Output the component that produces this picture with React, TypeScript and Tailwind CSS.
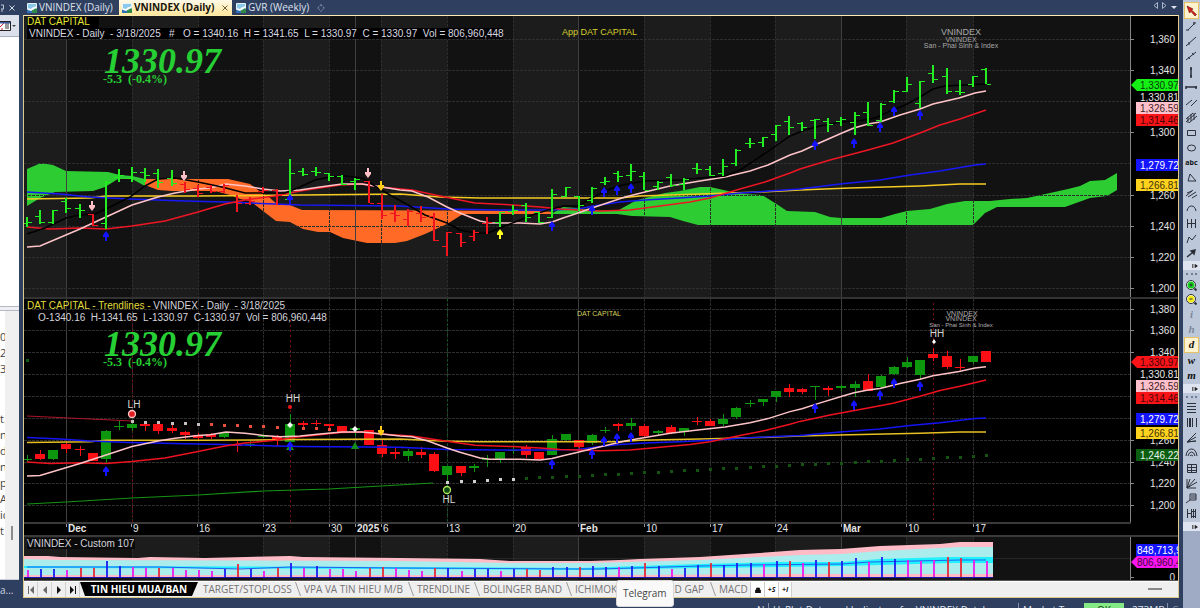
import React from "react";

type Pt = [number, number];

const x0 = 27;
const step = 13.137;
const bx = (i: number) => Math.round(x0 + i * step);
const toLower = (y: number) => 352 + (y - 70) * 0.701;

/* high, low, open, close as screen rows of the upper pane */
const bars: [number, number, number, number][] = [
  [217, 227, 223, 222], [210, 224, 216, 222], [210, 224, 222, 210], [198, 213, 201, 208], [204, 218, 208, 210],
  [214, 226, 214, 225], [181, 229, 223, 182], [169, 182, 177, 175], [167, 182, 178, 172], [168, 182, 172, 175],
  [169, 188, 173, 182], [170, 186, 178, 183], [182, 193, 184, 189], [185, 197, 188, 193], [185, 193, 187, 191],
  [184, 193, 191, 185], [195, 212, 202, 203], [197, 205, 203, 201], [187, 193, 191, 190], [189, 205, 190, 195],
  [159, 200, 199, 173], [168, 176, 171, 174], [167, 176, 171, 172], [173, 181, 173, 176], [175, 185, 176, 184],
  [178, 190, 181, 179], [181, 203, 181, 203], [194, 219, 203, 215], [205, 222, 213, 215], [209, 226, 219, 211],
  [206, 222, 213, 217], [213, 241, 216, 240], [232, 256, 246, 232], [233, 247, 233, 242], [230, 241, 236, 232],
  [217, 234, 223, 222], [212, 227, 222, 212], [205, 215, 211, 210], [203, 222, 205, 217], [212, 223, 212, 222],
  [189, 218, 217, 194], [187, 197, 196, 187], [196, 211, 196, 205], [187, 203, 200, 188], [177, 185, 182, 181],
  [171, 182, 173, 176], [164, 181, 175, 171], [172, 190, 176, 190], [181, 190, 186, 182], [174, 187, 177, 185],
  [178, 190, 184, 179], [163, 174, 168, 169], [166, 176, 169, 175], [159, 176, 173, 166], [149, 166, 163, 150],
  [138, 148, 143, 143], [137, 147, 142, 137], [125, 141, 134, 125], [116, 135, 121, 127], [122, 131, 123, 127],
  [119, 139, 120, 119], [118, 132, 121, 124], [117, 126, 121, 119], [112, 135, 122, 115], [102, 126, 112, 125],
  [103, 122, 120, 104], [90, 103, 101, 91], [77, 92, 91, 84], [81, 108, 103, 81], [65, 83, 73, 79],
  [68, 94, 76, 91], [80, 95, 91, 92], [76, 87, 84, 76], [68, 84, 69, 84],
];
const isDown = (i: number) => i === 5 || (i >= 12 && i <= 19) || (i >= 26 && i <= 35);

const pink: Pt[] = [[27, 247], [40, 246], [80, 229], [106, 217], [132, 205], [158, 197], [175, 193], [198, 189], [210, 188], [226, 184], [245, 186], [263, 189], [280, 191], [300, 190], [320, 187], [342, 184], [362, 184], [382, 187], [400, 190], [412, 191], [428, 197], [447, 207], [460, 213], [480, 221], [490, 223], [520, 223], [540, 224], [552, 222], [563, 218], [578, 213], [592, 208], [610, 202], [625, 197], [645, 192], [670, 186], [700, 181], [725, 177], [750, 171], [768, 165], [790, 155], [802, 151], [817, 144], [842, 133], [854, 128], [868, 124], [880, 122], [900, 115], [920, 109], [933, 104], [959, 98], [975, 93], [986, 91]];
const red: Pt[] = [[27, 227], [50, 229], [80, 228], [106, 229], [132, 226], [165, 221], [198, 212], [225, 204], [245, 200], [275, 196], [300, 191], [320, 188], [340, 185], [362, 184], [380, 187], [412, 190], [440, 196], [475, 203], [513, 205], [540, 207], [560, 209], [578, 210], [600, 211], [630, 210], [660, 206], [690, 202], [710, 198], [740, 189], [765, 182], [790, 173], [800, 169], [830, 160], [868, 150], [893, 143], [920, 133], [940, 125], [960, 119], [986, 110]];
const blue: Pt[] = [[27, 192], [60, 194], [90, 197], [130, 199], [185, 201], [225, 202], [250, 203], [275, 204], [300, 205], [400, 206], [447, 209], [500, 210], [550, 210], [578, 209], [600, 205], [620, 202], [645, 200], [680, 198], [710, 196], [740, 193], [770, 191], [800, 189], [840, 184], [880, 180], [910, 175], [940, 171], [975, 165], [986, 164]];
const yellow: Pt[] = [[27, 199], [90, 198], [106, 196], [200, 196], [300, 195], [400, 194], [440, 197], [480, 198], [560, 198], [620, 198], [640, 196], [700, 194], [760, 192], [800, 190], [850, 188], [920, 186], [960, 184], [986, 184]];
const black: Pt[] = [[27, 234], [45, 228], [66, 218], [80, 215], [95, 214], [110, 207], [130, 197], [145, 186], [158, 179], [175, 178], [198, 182], [222, 187], [245, 193], [285, 193], [300, 187], [315, 180], [330, 177], [345, 176], [362, 178], [378, 188], [390, 195], [408, 205], [425, 215], [447, 223], [460, 230], [475, 233], [488, 233], [500, 228], [520, 220], [535, 214], [548, 210], [563, 206], [578, 206], [590, 199], [605, 191], [622, 185], [645, 181], [680, 180], [700, 178], [725, 176], [740, 170], [755, 160], [770, 150], [780, 143], [790, 136], [805, 130], [820, 126], [841, 122], [858, 121], [875, 118], [893, 110], [905, 105], [920, 97], [933, 89], [945, 86], [986, 84]];

const pts = (line: Pt[], lower = false) => line.map(([x, y]) => `${x},${lower ? toLower(y).toFixed(1) : y}`).join(" ");

const weeks = [132, 198, 263, 329, 381, 447, 513, 644, 710, 775, 906, 973];
const months = [66, 355, 578, 841];
const lightBands: Pt[] = [[24, 66], [132, 198], [263, 329], [381, 447], [513, 578], [644, 710], [775, 841], [906, 973]];

function Bands({ top, height }: { top: number; height: number }) {
  return (
    <g>
      <rect x="24" y={top} width="1107" height={height} fill="#121212" />
      {lightBands.map(([a, b]) => (
        <rect key={a} x={a} y={top} width={b - a} height={height} fill="#1c1c1c" />
      ))}
    </g>
  );
}

function Verticals({ top, bottom }: { top: number; bottom: number }) {
  return (
    <g shapeRendering="crispEdges">
      {weeks.map((x) => (
        <line key={x} x1={x + 0.5} x2={x + 0.5} y1={top} y2={bottom} stroke="#2c2c2c" strokeDasharray="3 1" />
      ))}
      {months.map((x) => (
        <line key={x} x1={x + 0.5} x2={x + 0.5} y1={top} y2={bottom} stroke="#404040" />
      ))}
    </g>
  );
}

function Horizontals({ rows }: { rows: number[] }) {
  return (
    <g shapeRendering="crispEdges">
      {rows.map((y) => (
        <g key={y}>
          <line x1="24" x2="1130" y1={y + 0.5} y2={y + 0.5} stroke="#2e2e2e" strokeDasharray="3 1" />
          <line x1="1131" x2="1134" y1={y + 0.5} y2={y + 0.5} stroke="#8a8a8a" />
        </g>
      ))}
    </g>
  );
}

const arrowPath = "M0 0 L3 4 V6 H1 V10 H-1 V6 H-3 V4 Z";
function Up({ x, y, fill = "#1414ff" }: { x: number; y: number; fill?: string }) {
  return <path d={arrowPath} transform={`translate(${x} ${y})`} fill={fill} />;
}
function Down({ x, y, fill }: { x: number; y: number; fill: string }) {
  return <path d={arrowPath} transform={`translate(${x} ${y}) rotate(180)`} fill={fill} />;
}

function Tag({ y, fill, text, color, pointer = false }: { y: number; fill: string; text: string; color: string; pointer?: boolean }) {
  return (
    <g>
      {pointer ? (
        <path d={`M1131 ${y} L1137 ${y - 6} H1178 V${y + 6} H1137 Z`} fill={fill} />
      ) : (
        <rect x="1136" y={y - 6} width="42" height="12" fill={fill} />
      )}
      <text x={text.length > 8 ? 1137 : 1140} y={y + 4} fill={color} fontSize="10">{text}</text>
    </g>
  );
}

function PriceAxis({ top, height, labels }: { top: number; height: number; labels: [number, string][] }) {
  return (
    <g>
      <rect x="1131" y={top} width="47" height={height} fill="#000" />
      <rect x="1130" y={top} width="1" height={height} fill="#858585" />
      {labels.map(([y, t]) => (
        <g key={t}>
          <rect x="1131" y={y} width="3" height="1" fill="#8a8a8a" />
          <text x="1175" y={y + 4} fill="#e4e4e4" fontSize="10" textAnchor="end">{t}</text>
        </g>
      ))}
    </g>
  );
}

function LastPrice({ top }: { top: number }) {
  return (
    <g fill="#26cf33" fontFamily="Liberation Serif, serif" fontWeight="700">
      <text x="104" y={top + 24} fontSize="36" fontStyle="italic">1330.97</text>
      <text x="103" y={top + 34} fontSize="12" className="whitespace-pre">{"-5.3  (-0.4%)"}</text>
    </g>
  );
}

const paneClass = "block h-auto w-full font-['Liberation_Sans',sans-serif]";

function UpperPane() {
  const upArrows: Pt[] = [[106, 231], [290, 194], [552, 221], [592, 205], [604, 187], [617, 185], [631, 183], [815, 140], [854, 138], [880, 122], [894, 106], [920, 110]];
  return (
    <svg viewBox="24 16 1154 283" className={paneClass} role="img" aria-label="VNINDEX daily price bars">
      <Bands top={16} height={283} />
      <g fill="#2ecc33">
        <path d="M27 169 L41 163 L53 165 L66 171 L108 172 L120 175 L132 176 L145 179 V186 L132 179 L118 179 L105 187 L93 191 L55 192 L40 198 L27 206 Z" />
        <path d="M553 213 L563 207 L575 208 L590 210 L617 211 L635 201 L645 198 L665 193 L680 191 L700 187 L710 187 L728 191 L745 194 L762 195 L775 203 L787 211 L815 212 L830 217 L841 218 L881 218 L895 214 L907 211 L930 209 L947 204 L965 201 L990 201 L1010 199 L1027 198 L1050 193 L1068 189 L1080 186 L1090 181 L1105 180 L1117 173 V190 L1107 196 L1090 198 L1065 207 L997 207 L985 213 L973 225 L698 225 L683 221 L670 217 L632 216 L617 214 L553 214 Z" />
      </g>
      <path d="M145 179 L228 179 L250 184 L262 193 L270 198 L278 205 L290 205 L302 210 L540 211 L553 212 V214 L463 214 L455 219 L447 224 L425 234 L407 241 L395 243 L367 243 L343 238 L330 232 L318 232 L303 229 L290 222 L276 221 L263 211 L250 201 L240 199 L230 195 L215 191 L172 191 L158 190 L145 185 Z" fill="#ff6a26" />
      <Verticals top={16} bottom={297} />
      <Horizontals rows={[39, 70, 101, 132, 163, 195, 226, 257, 288]} />
      <g fill="none" strokeWidth="1.5">
        <polyline points={pts(yellow)} stroke="#f5cb22" />
        <polyline points={pts(blue)} stroke="#1818f5" />
        <polyline points={pts(red)} stroke="#ee1624" />
        <polyline points={pts(pink)} stroke="#ffc4c8" />
        <polyline points={pts(black)} stroke="#000" />
      </g>
      <g shapeRendering="crispEdges">
        {bars.map(([h, l, o, c], i) => (
          <g key={i} fill={isDown(i) ? "#f2151f" : "#22ee22"}>
            <rect x={bx(i) - 1} y={h} width="2" height={l - h} />
            <rect x={bx(i) - 5} y={o} width="4" height="1" />
            <rect x={bx(i) + 1} y={c} width="4" height="1" />
          </g>
        ))}
      </g>
      {upArrows.map(([x, y]) => <Up key={x} x={x} y={y} />)}
      <Up x={500} y={229} fill="#ffff22" />
      <Down x={92} y={211} fill="#ffc0c8" />
      <Down x={184} y={181} fill="#ffc0c8" />
      <Down x={368} y={178} fill="#ffc0c8" />
      <Down x={381} y={191} fill="#ffcc18" />
      <rect x="27" y="17" width="72" height="11" fill="#000" />
      <rect x="27" y="28" width="476" height="11" fill="#000" />
      <text x="27" y="25" fontSize="10" fill="#e6e632">DAT CAPITAL</text>
      <text x="29" y="37" fontSize="10" fill="#d8d8e0" className="whitespace-pre">
        {"VNINDEX - Daily  - 3/18/2025   #   O = 1340.16  H = 1341.65  L = 1330.97  C = 1330.97  Vol = 806,960,448"}
      </text>
      <text x="562" y="35" fontSize="9" fill="#d6cf2e">App DAT CAPITAL</text>
      <g fill="#a8a8a8" textAnchor="middle">
        <text x="961" y="35" fontSize="9">VNINDEX</text>
        <text x="961" y="42" fontSize="7">VNINDEX</text>
        <text x="961" y="48" fontSize="7">San - Phai Sinh &amp; Index</text>
      </g>
      <LastPrice top={49} />
      <rect x="24" y="297" width="1154" height="2" fill="#333" />
      <PriceAxis top={16} height={281} labels={[[39, "1,360"], [70, "1,340"], [132, "1,300"], [195, "1,260"], [226, "1,240"], [257, "1,220"], [288, "1,200"]]} />
      <Tag y={85} fill="#14f014" text="1,330.97" color="#083808" pointer />
      <Tag y={97} fill="#000" text="1,330.81" color="#e8e8e8" />
      <Tag y={108} fill="#ffc0cb" text="1,326.59" color="#3a2024" />
      <Tag y={120} fill="#fa1418" text="1,314.46" color="#480408" />
      <Tag y={165} fill="#1414ff" text="1,279.72" color="#fff" />
      <Tag y={185} fill="#ffd21e" text="1,266.81" color="#3c3008" />
    </svg>
  );
}

function LowerPane() {
  const upArrows: Pt[] = [[106, 466], [290, 441], [552, 459], [592, 449], [604, 436], [617, 433], [631, 432], [815, 403], [854, 400], [880, 390], [894, 378], [920, 381]];
  const dates: [number, string, boolean][] = [[68, "Dec", true], [133, "9", false], [199, "16", false], [265, "23", false], [331, "30", false], [357, "2025", true], [383, "6", false], [449, "13", false], [515, "20", false], [580, "Feb", true], [646, "10", false], [712, "17", false], [777, "24", false], [843, "Mar", true], [908, "10", false], [975, "17", false]];
  const resist = [8, 9, 10, 11, 12, 13, 14, 15, 16, 17, 18, 19, 21, 22, 23];
  return (
    <svg viewBox="24 299 1154 238" className={paneClass} role="img" aria-label="VNINDEX daily candles with trendlines">
      <rect x="24" y="299" width="1154" height="238" fill="#000" />
      <Verticals top={299} bottom={522} />
      <Horizontals rows={[309, 330, 352, 374, 396, 418, 440, 462, 483, 505]} />
      <g strokeDasharray="2 3" shapeRendering="crispEdges">
        <path d="M132.500 320 V522 M290.500 320 V522 M933.500 303 V522" stroke="#7a0e14" />
        <path d="M447.500 299 V522" stroke="#0d5a22" />
      </g>
      <polyline points="27,416 132,421" stroke="#b01428" fill="none" />
      <polyline points="27,504 66,502 132,498 198,495 263,491 329,489 433,483" stroke="#149414" fill="none" strokeWidth="1.2" />
      <g shapeRendering="crispEdges">
        {bars.map(([h, l, o, c], i) => {
          const yo = Math.round(toLower(o));
          const yc = Math.round(toLower(c));
          return (
            <g key={i} fill={c <= o ? "#0c970f" : "#fa0f14"}>
              <rect x={bx(i)} y={Math.round(toLower(h))} width="1" height={Math.round((l - h) * 0.701)} />
              <rect x={bx(i) - 5} y={Math.min(yo, yc)} width="10" height={Math.max(1, Math.abs(yo - yc))} />
            </g>
          );
        })}
      </g>
      <g fill="none" strokeWidth="1.5">
        <polyline points={pts(yellow, true)} stroke="#e6c022" />
        <polyline points={pts(blue, true)} stroke="#1414f5" />
        <polyline points={pts(red, true)} stroke="#ee1220" />
        <polyline points={pts(pink, true)} stroke="#ffc4c8" />
      </g>
      <g shapeRendering="crispEdges">
        {resist.map((i) => (
          <rect key={i} x={bx(i) - 1} y={Math.round(420 + (i - 8) * 0.53)} width="3" height="3" fill={i < 14 ? "#c8c0c0" : "#e8503c"} />
        ))}
        {Array.from({ length: 42 }, (_, k) => k + 32).map((i) => (
          <rect key={i} x={bx(i) - 1} y={Math.round(481 - (i - 32) * 0.65)} width="3" height="3" fill={i < 38 ? "#d0d0d0" : "#145214"} />
        ))}
        <rect x="26" y="359" width="3" height="3" fill="#0c5c14" />
      </g>
      <path d="M290 443 L294 450 H286 Z M355 442 L359 449 H351 Z" fill="#128c1c" />
      {upArrows.map(([x, y]) => <Up key={x} x={x} y={y} />)}
      <Down x={381} y={436} fill="#ffcc18" />
      <circle cx="132" cy="414" r="3.500" fill="#e02024" stroke="#ffc8c8" strokeWidth="1.300" />
      <circle cx="447" cy="490" r="3.500" fill="#0d4c12" stroke="#b4e860" strokeWidth="1.300" />
      <circle cx="290" cy="407" r="2" fill="#f01818" />
      <path d="M290 422 L293 425 L290 428 L287 425 Z M355 426 L358 429 L355 432 L352 429 Z M934 339 L936 342 L934 344 L932 342 Z" fill="#fff" />
      <g fontSize="10" fill="#d8d8d8" textAnchor="middle">
        <text x="134" y="408">LH</text>
        <text x="293" y="402">HH</text>
        <text x="937" y="337">HH</text>
        <text x="449" y="503">HL</text>
      </g>
      <text x="27" y="309" fontSize="10" className="whitespace-pre">
        <tspan fill="#e0dc3c">{"DAT CAPITAL - Trendlines - "}</tspan>
        <tspan fill="#d4d4dc">{"VNINDEX - Daily  - 3/18/2025"}</tspan>
      </text>
      <text x="38" y="321" fontSize="10" fill="#d4d4dc" className="whitespace-pre">
        {"O-1340.16  H-1341.65  L-1330.97  C-1330.97  Vol = 806,960,448"}
      </text>
      <text x="577" y="316" fontSize="7" fill="#d6cf5e">DAT CAPITAL</text>
      <g fill="#b0b0b0" textAnchor="middle">
        <text x="962" y="316" fontSize="7">VNINDEX</text>
        <text x="961" y="321" fontSize="7">VNINDEX</text>
        <text x="961" y="327" fontSize="6">San - Phai Sinh &amp; Index</text>
      </g>
      <LastPrice top={332} />
      <rect x="24" y="524" width="1154" height="11" fill="#000" />
      <rect x="24" y="522" width="1107" height="2" fill="#3a3a3a" />
      {dates.map(([x, t, bold]) => (
        <g key={x}>
          <rect x={x - 2} y="524" width="1" height="3" fill="#999" />
          <text x={x} y="532" fontSize="10" fill="#e6e6e6" fontWeight={bold ? 700 : 400}>{t}</text>
        </g>
      ))}
      <PriceAxis top={299} height={223} labels={[[309, "1,380"], [330, "1,360"], [352, "1,340"], [440, "1,260"], [462, "1,240"], [483, "1,220"], [505, "1,200"]]} />
      <Tag y={362} fill="#fa1418" text="1,330.97" color="#480408" pointer />
      <Tag y={374} fill="#000" text="1,330.81" color="#e8e8e8" />
      <Tag y={386} fill="#ffc0cb" text="1,326.59" color="#3a2024" />
      <Tag y={398} fill="#fa1418" text="1,314.46" color="#480408" />
      <Tag y={419} fill="#1414ff" text="1,279.72" color="#fff" />
      <Tag y={433} fill="#ffd21e" text="1,266.81" color="#3c3008" />
      <Tag y={455} fill="#0b5d10" text="1,246.22" color="#e8f4e8" />
      <rect x="24" y="535" width="1154" height="2" fill="#3a3a3a" />
    </svg>
  );
}

const volTops = [360, 358, 358, 360, 355, 353, 332, 347, 350, 353, 353, 353, 360, 360, 363, 358, 342, 358, 362, 353, 338, 355, 348, 357, 358, 362, 353, 350, 353, 360, 363, 355, 355, 362, 358, 358, 362, 358, 358, 360, 352, 352, 352, 347, 350, 352, 348, 338, 348, 357, 355, 345, 338, 345, 338, 338, 343, 333, 332, 340, 330, 335, 333, 325, 335, 322, 328, 330, 332, 330, 322, 325, 330, 333];
const volKinds = "mbbmrrbbmmrmmmmbrbmrbmbmmmrrmmmrbmbbmbrrbbrbbmbrbmbbrbbbmbrmbrbbmbbmmmrrmm";
const volColors: Record<string, string> = { m: "#f018e8", b: "#1c1cf0", r: "#e82838" };

function VolumePane() {
  return (
    <svg viewBox="24 537 1154 44" className={paneClass} role="img" aria-label="VNINDEX volume">
      <Bands top={537} height={44} />
      <rect x="24" y="558" width="1107" height="1" fill="#262626" />
      <Verticals top={537} bottom={578} />
      <path d="M24 556 L48 556 L60 557 L138 558 L150 557 L205 558 L290 556 L303 557 L400 558 L480 559 L510 561 L590 561 L620 560 L640 559 L700 557 L760 553 L800 550 L841 549 L880 546 L940 544 L960 542 L993 542 V577 H24 Z" fill="#ffbcc6" />
      <path d="M24 559 L60 560 L400 561 L510 563 L590 563 L700 560 L760 557 L800 555 L841 554 L880 551 L960 547 L993 547 V574 L800 574 L600 575 L24 575 Z" fill="#abecec" />
      <path d="M24 566 L400 567 L580 568 L700 564 L780 562 L841 562 L880 559 L950 557 L993 557 V563 L950 563 L880 565 L841 566 L780 567 L700 568 L580 570 L400 569 L24 568 Z" fill="#20f0ff" />
      <polyline points="27,567 160,567 240,569 290,567 400,568 578,569 600,569 700,566 750,565 841,564 870,562 960,560 986,560" stroke="#2060f0" fill="none" />
      <g shapeRendering="crispEdges">
        {volTops.map((v, i) => {
          const y = Math.round(450 + v / 3);
          return <rect key={i} x={bx(i)} y={y} width="2" height={577 - y} fill={volColors[volKinds[i]]} fillOpacity="0.9" />;
        })}
        <rect x="24" y="577" width="969" height="1" fill="#1818b0" />
      </g>
      <rect x="27" y="538" width="108" height="11" fill="#0a0a0a" />
      <text x="27" y="547" fontSize="10" fill="#d4d4dc">VNINDEX - Custom 107</text>
      <PriceAxis top={537} height={43} labels={[[577, "0"]]} />
      <Tag y={550} fill="#1414ff" text="848,713,984" color="#fff" />
      <Tag y={562} fill="#fa14f0" text="806,960,448" color="#3c0838" pointer />
      <rect x="24" y="580" width="1154" height="1" fill="#555" />
    </svg>
  );
}

function ChartIcon() {
  return (
    <svg viewBox="0 0 10 10" className="size-[10px] shrink-0">
      <rect width="10" height="10" rx="1" fill="#e8f4fb" />
      <path d="M1 1 H9 V5 L6 4 L4 6 L1 5 Z" fill="#8cc8ea" />
      <path d="M0 7 L3 6 L5 7 L9 5 L10 6 V10 H0 Z" fill="#2f8a4c" />
      <path d="M0 7 L3 6 L5 8 V10 H0 Z" fill="#2c6fb4" />
      <path d="M1 6 L4 6 L9 3 V5 L4 8 L1 7 Z" fill="#f6fbff" />
    </svg>
  );
}

function DocumentTabs() {
  return (
    <header className="flex h-[15px] items-stretch text-[10px] leading-[13px] text-[#dde2ec]">
      <button className="flex w-24 items-center gap-0.5 pl-1 whitespace-nowrap"><ChartIcon />VNINDEX (Daily)</button>
      <button className="flex w-[113px] items-center gap-0.5 bg-linear-to-b from-[#fff9e6] to-[#ffe79c] pl-[3px] font-bold whitespace-nowrap text-[#16140c]">
        <ChartIcon />VNINDEX (Daily)
        <svg viewBox="0 0 6 6" className="mr-1 ml-auto size-[6px]"><path d="M0.500 0.500 L5.500 5.500 M5.500 0.500 L0.500 5.500" stroke="#6c5d3c" /></svg>
      </button>
      <button className="flex items-center gap-0.5 pl-1 whitespace-nowrap"><ChartIcon />GVR (Weekly)</button>
      <button aria-label="New tab" className="pl-2">
        <svg viewBox="0 0 8 8" className="size-2"><path d="M4 0.500 L5.500 2.500 L7.500 4 L5.500 5.500 L4 7.500 L2.500 5.500 L0.500 4 L2.500 2.500 Z" fill="none" stroke="#8b97b2" strokeDasharray="2 1" /></svg>
      </button>
      <nav className="ml-auto flex items-center gap-1 pr-0.5 pb-1">
        <button aria-label="Previous tab"><svg viewBox="0 0 5 7" className="h-[7px] w-[5px]"><path d="M4.500 0.500 V6.500 L1 3.500 Z" fill="none" stroke="#aab4ca" /></svg></button>
        <button aria-label="Next tab"><svg viewBox="0 0 5 7" className="h-[7px] w-[5px]"><path d="M0.500 0.500 V6.500 L4 3.500 Z" fill="none" stroke="#aab4ca" /></svg></button>
        <button aria-label="Tab list" className="pt-1"><svg viewBox="0 0 6 3" className="h-[3px] w-[6px]"><path d="M0 0 H6 L3 3 Z" fill="#dde2ec" /></svg></button>
      </nav>
    </header>
  );
}

function NavButton({ label, d, dark = false }: { label: string; d: string; dark?: boolean }) {
  return (
    <button aria-label={label} className="flex w-[14px] shrink-0 items-center justify-center border-r border-[#d0d0d0]">
      <svg viewBox="0 0 8 8" className="size-2"><path d={d} fill={dark ? "#111" : "#6a6a6a"} /></svg>
    </button>
  );
}

function SheetTab({ label, width }: { label: string; width: string }) {
  return (
    <button className={`relative shrink-0 text-left whitespace-nowrap ${width}`}>
      {label}
      <svg viewBox="0 0 6 14" className="absolute top-0 right-[3px] h-[14px] w-[6px]"><path d="M0.500 0 L5.500 14" stroke="#9a9a9a" fill="none" /></svg>
    </button>
  );
}

function SheetTabs() {
  return (
    <footer className="flex h-4 items-stretch border-t border-white bg-[#efefef] text-[10px] leading-[13px] text-[#747474]">
      <NavButton label="First sheet" d="M1 0 H2 V8 H1 Z M7 0 V8 L3 4 Z" />
      <NavButton label="Previous sheet" d="M6 0 V8 L2 4 Z" />
      <NavButton label="Next sheet" d="M2 0 V8 L6 4 Z" dark />
      <NavButton label="Last sheet" d="M1 0 V8 L5 4 Z M6 0 H7 V8 H6 Z" dark />
      <button className="relative w-[118px] shrink-0 text-center font-bold whitespace-nowrap text-white">
        <svg viewBox="0 0 118 15" preserveAspectRatio="none" className="absolute inset-0 h-full w-full"><path d="M0 0 H118 L112 14 H5 Z" fill="#000" /></svg>
        <span className="relative">TIN HIEU MUA/BAN</span>
      </button>
      <div className="w-[5px] shrink-0" />
      <SheetTab label="TARGET/STOPLOSS" width="w-[101px]" />
      <SheetTab label="VPA VA TIN HIEU M/B" width="w-[113px]" />
      <SheetTab label="TRENDLINE" width="w-[66px]" />
      <SheetTab label="BOLINGER BAND" width="w-[92px]" />
      <SheetTab label="ICHIMOKU" width="w-[78px]" />
      <SheetTab label="MACD GAP" width="w-[66px]" />
      <button className="w-[31px] shrink-0 text-left">MACD</button>
      <button aria-label="Lock" className="flex w-[14px] items-center justify-center border-l border-[#cfcfcf] bg-white">
        <svg viewBox="0 0 6 6" className="size-[6px]"><path d="M0.500 3 H5.500 V6 H0.500 Z M1.500 3 V1 H4.500 V3" fill="#111" stroke="#111" strokeWidth="0.700" /></svg>
      </button>
      <button className="w-[14px] border-l border-[#cfcfcf] bg-white text-[7px] font-bold text-[#222] italic">+S</button>
      <button className="w-[14px] border-x border-[#cfcfcf] bg-white text-[7px] font-bold text-[#222] italic">+I</button>
      <span className="mt-[6px] mr-4 ml-auto h-0.5 w-3.5 bg-[#888]" />
    </footer>
  );
}

const drawTools: [string, React.ReactNode][] = [
  ["Trend line", <path d="M4 11 L10 5 M2 11 H5 M10 3 V6 M9 4 H12" />],
  ["Ray", <path d="M2 12 L12 3 M5 8 V11" />],
  ["Extended line", <path d="M2 11 L12 3 M4 8 L6 10 M8 4 L10 6" />],
  ["Vertical line", <path d="M7 2 V13 M6 4 H8 M6 11 H8" strokeWidth="1.500" />],
  ["Horizontal line", <path d="M2 7 H13 M2 6 V9 M12 6 V9" strokeWidth="1.500" />],
  ["Parallel lines", <path d="M2 10 L8 5 M7 11 L13 5" />],
  ["Regression channel", <path d="M2 12 L12 3 M2 9 L9 3 M5 13 L13 6 M4 7 V13 M7 4 V11 M10 3 V10" />],
  ["Rectangle", <path d="M3.500 5.500 H11.500 V10.500 H3.500 Z" />],
  ["Ellipse", <ellipse cx="7.500" cy="8" rx="4" ry="3" />],
  ["Text", <text x="7.500" y="10" textAnchor="middle" fontSize="7" fontWeight="700" fill="#111" stroke="none">abc</text>],
  ["Triangle", <path d="M4 11 L6 4 L12 11 Z" />],
  ["Pitchfork", <path d="M2 10 L9 4 M4 11 L12 6 M3 7 L8 5 M8 12 L13 9" />],
  ["Arc", <path d="M3 10 Q4 5 7.500 5 Q11 5 12 10" />],
  ["Time zones", <path d="M3.500 3 V12 M7.500 3 V12 M11.500 3 V12 M3 7.500 H12" />],
  ["Zigzag", <path d="M3 12 L5 6 L8 9 L12 4" />],
  ["Arrow", <path d="M3 11 L8 7 M7 5 L11 4 L10 8 Z" fill="#111" strokeWidth="1.500" />],
];

const moreTools: [string, React.ReactNode][] = [
  ["Retracement", <path d="M3 3.500 H12 M3 6.500 H12 M3 9.500 H12 M3 12.500 H12" />],
  ["Cycles", <path d="M3.500 3 V12 M5.500 3 V12 M6.500 3 V12 M8.500 3 V12 M12.500 3 V12" />],
  ["Fan", <path d="M3 12 L12 3 M3 12 L12 7 M3 12 L12 11 Z" />],
  ["Arcs", <path d="M2 11 Q3 4 7.500 4 Q12 4 13 11 M4 11 Q5 7 7.500 7 Q10 7 11 11 M6 11 Q7 9 9 11" />],
  ["Grid", <path d="M3.500 3.500 H12.500 V11.500 H3.500 Z M3 6.500 H12 M3 9.500 H12 M7.500 3 V12" />],
  ["Gann fan", <path d="M3 3 V12 H12 M3 12 L6 3 M3 12 L11 3 M3 12 L13 6" />],
  ["Note", <path d="M6 3 H12 V9 H6 Z M7 5 H12 M7 7 H12 M6 9 L2 12" />],
  ["Extension", <path d="M3.500 3 V12 M3 7.500 H7 M7.500 3 V12 M9.500 3 V12 M11.500 3 V12 M7 5.500 H12 M7 10.500 H12" />],
];

function ToolButton({ label, children }: { label: string; children: React.ReactNode }) {
  return (
    <button aria-label={label} className="flex min-h-0 flex-1 items-center justify-center">
      <svg viewBox="0 0 15 15" className="size-[15px]" fill="none" stroke="#2c313c">{children}</svg>
    </button>
  );
}

function Overflow() {
  return (
    <div className="flex h-[9px] items-center justify-end bg-[#dfe5f0] pr-0.5">
      <svg viewBox="0 0 6 4" className="h-1 w-1.5"><path d="M0.500 0 V4 M2 0 V4" stroke="#444" strokeWidth="0.800" /><path d="M3 0 L6 2 L3 4 Z" fill="#222" /></svg>
    </div>
  );
}

function Grip() {
  return <div className="mx-auto h-0.5 w-[11px] border-t-2 border-dotted border-[#6f7c96]" />;
}

function Toolbar() {
  return (
    <aside className="flex w-[17px] shrink-0 flex-col bg-[#bcc7d9] pt-0.5">
      <div className="flex h-[259px] flex-col">
        <button aria-label="Select" className="mx-auto flex w-[15px] flex-1 items-center justify-center border border-[#e5c365] bg-[#fff3cf]">
          <svg viewBox="0 0 12 12" className="size-3"><path d="M1 1 L7 4 L5.500 5 L10.500 9.500 L9 11 L5 6.500 L3.500 8 Z" fill="#e02018" stroke="#501010" strokeWidth="0.600" /></svg>
        </button>
        {drawTools.map(([l, icon]) => <ToolButton key={l} label={l}>{icon}</ToolButton>)}
      </div>
      <Overflow />
      <div className="h-2 pt-[3px]"><Grip /></div>
      <div className="flex h-[105px] flex-col font-['Liberation_Serif',serif] text-[11px] leading-[15px] font-bold italic">
        <ToolButton label="Zoom in"><circle cx="7" cy="7" r="4.500" fill="#fff" /><circle cx="7" cy="7" r="3.500" fill="#17d01d" stroke="none" /><path d="M5.500 7 H8.500 M7 5.500 V8.500" /><path d="M10.500 10.500 L12.500 12.500" strokeWidth="2" /></ToolButton>
        <ToolButton label="Zoom out"><circle cx="7" cy="7" r="4.500" fill="#fff" /><circle cx="7" cy="7" r="3.500" fill="#f2ea1b" stroke="none" /><path d="M5.500 7 H8.500" /><path d="M10.500 10.500 L12.500 12.500" strokeWidth="2" /></ToolButton>
        <button className="flex-1 text-[#7c8799]">i</button>
        <button className="flex-1 text-[#7c8799]">h</button>
        <button className="mx-auto w-[15px] flex-1 border border-[#e5c365] bg-[#fff3cf] leading-[13px] text-[#111]">d</button>
        <button className="flex-1 text-[#111]">w</button>
        <button className="flex-1 text-[#111]">m</button>
      </div>
      <div className="h-[1px]" />
      <Overflow />
      <div className="h-[7px] pt-[3px]"><Grip /></div>
      <div className="flex h-[121px] flex-col">
        {moreTools.map(([l, icon]) => <ToolButton key={l} label={l}>{icon}</ToolButton>)}
      </div>
      <div className="h-[10px] pt-px"><Overflow /></div>
      <div className="flex-1 bg-[#9fabc4]" />
    </aside>
  );
}

function SidePanel() {
  const upper = ["0", "2", "3"];
  const lower = ["t.", "n", "d", "n.", "p", "A", "ic", "t"];
  return (
    <aside className="flex w-[19px] shrink-0 flex-col overflow-hidden bg-[#2f3f60]">
      <div className="flex h-[15px] items-center justify-between pr-1 pl-px">
        <svg viewBox="0 0 4 8" className="h-2 w-1"><path d="M0 1 H2.500 V5 H0 M1 5 V8" stroke="#c0c8d8" fill="none" /></svg>
        <svg viewBox="0 0 6 6" className="size-[6px]"><path d="M0.500 0.500 L5.500 5.500 M5.500 0.500 L0.500 5.500" stroke="#d6dce8" /></svg>
      </div>
      <div className="flex h-[22px] items-center gap-px border-b border-[#a8b0c0] bg-[#dbe0ea]">
        <svg viewBox="0 0 11 10" className="h-2.5 w-[11px]"><path d="M0 0.500 H10.500 V9.500 H0" fill="#fff" stroke="#222" /><path d="M5 3 H9 M5 5 H9 M5 7 H9" stroke="#333" /><path d="M0 6 L4 2 M1 8 H3" stroke="#d0202c" /><rect y="1" width="10" height="1.500" fill="#3858a0" /></svg>
        <svg viewBox="0 0 4 2" className="h-0.5 w-1"><path d="M0 0 H4 L2 2 Z" fill="#444" /></svg>
      </div>
      <div className="h-[269px] bg-white" />
      <div className="h-[5px] border-y border-[#b4b8c2] bg-[#eef0f4]" />
      <div className="flex flex-1 border-b border-[#c8ccd4] bg-white">
        <div className="flex w-[5px] flex-col gap-[34px] overflow-hidden pt-[18px] text-[11px] leading-[16px] text-[#444]">
          <div>{upper.map((l) => <p key={l}>{l}</p>)}</div>
          <div>{lower.map((l) => <p key={l}>{l}</p>)}</div>
        </div>
        <div className="flex flex-1 justify-center bg-[#f0f0f0] pt-[215px]">
          <div className="h-[14px] w-0.5 bg-[#8c8c8c]" />
        </div>
      </div>
      <p className="h-[28px] pt-1 text-[10px] leading-[12px] text-[#ccd3e0]">a...</p>
    </aside>
  );
}

function StatusBar() {
  return (
    <div className="flex h-[10px] items-start overflow-hidden pt-[5px] pl-[734px] text-[10px] leading-[15px] whitespace-nowrap text-[#dfe4ee]">
      <span className="w-[11px] shrink-0">N</span>
      <span className="w-[17px] shrink-0 border-l border-[#8490aa] pl-1">H</span>
      <span className="w-[233px] shrink-0 overflow-hidden">Plot Data and Indicators for VNINDEX Database</span>
      <span className="w-[66px] shrink-0 border-l border-[#8490aa] pl-1">Market Tr.</span>
      <span className="w-10 shrink-0 bg-[#84e884] text-center text-[#143814]">OK</span>
      <span className="w-[43px] shrink-0 pl-2">273MB</span>
      <span className="border-l border-[#8490aa] pl-1 text-[#8a93a8]">C</span>
    </div>
  );
}

export default function App() {
  return (
    <div className="flex min-h-screen gap-1 overflow-hidden bg-[#2f3f60] font-['Open_Sans','Noto_Sans',sans-serif]">
      <SidePanel />
      <main className="relative flex min-w-0 flex-1 flex-col">
        <DocumentTabs />
        <section className="border border-[#dcc98c] border-t-[#ffeab0] bg-black">
          <UpperPane />
          <LowerPane />
          <VolumePane />
          <SheetTabs />
        </section>
        <StatusBar />
        <div role="tooltip" className="absolute bottom-px left-[593px] rounded-[3px] border border-[#d8d8d8] bg-[#f9f9f9] px-1.5 py-[5px] text-[10px] leading-[15px] text-[#444]">
          Telegram
        </div>
      </main>
      <Toolbar />
    </div>
  );
}
